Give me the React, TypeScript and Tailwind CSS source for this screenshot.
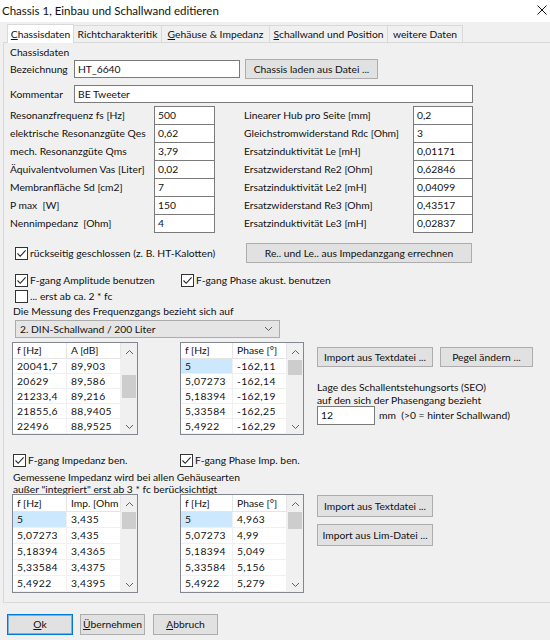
import React from 'react';

type Row = [string, string];

function Btn({ children, className = '' }: { children: React.ReactNode; className?: string }) {
  return (
    <div className={`flex items-center justify-center border border-[#adadad] bg-[#e1e1e1] whitespace-nowrap ${className}`}>
      {children}
    </div>
  );
}

function TextBox({ value, className = '' }: { value: string; className?: string }) {
  return (
    <div className={`flex items-center border border-[#7a7a7a] bg-white px-[3px] whitespace-nowrap ${className}`}>
      {value}
    </div>
  );
}

function Check({ checked }: { checked?: boolean }) {
  return (
    <div className="w-[13px] h-[13px] shrink-0 border border-[#333] bg-white flex items-center justify-center">
      {checked && (
        <svg width="11" height="11" viewBox="0 0 11 11">
          <path d="M1.5 5.5 L4.2 8.3 L9.6 2.3" fill="none" stroke="#222" strokeWidth="1.1" />
        </svg>
      )}
    </div>
  );
}

function Chevron({ up }: { up?: boolean }) {
  return (
    <svg width="9" height="6" viewBox="0 0 9 6">
      <polyline points={up ? '1,5 4.5,1.5 8,5' : '1,1 4.5,4.5 8,1'} fill="none" stroke="#606060" strokeWidth="1" />
    </svg>
  );
}

function Grid({
  head,
  rows,
  sel,
  size,
  c1,
  c2,
  thumb,
  headH,
  rowH,
}: {
  head: Row;
  rows: Row[];
  sel?: boolean;
  size: string;
  c1: string;
  c2: string;
  thumb: string;
  headH: string;
  rowH: string;
}) {
  return (
    <div className={`flex border border-[#828790] bg-white overflow-hidden shrink-0 ${size}`}>
      <div className="flex flex-col">
        <div className={`flex shrink-0 ${headH}`}>
          <div className={`${c1} border-r border-b border-[#e5e5e5] pl-[4px] flex items-center`}>{head[0]}</div>
          <div className={`${c2} border-r border-b border-[#e5e5e5] pl-[4px] flex items-center`}>{head[1]}</div>
        </div>
        {rows.map((r, i) => (
          <div key={i} className={`flex shrink-0 tracking-[0.4px] ${rowH}`}>
            <div
              className={`${c1} border-r border-b border-[#f0f0f0] pl-[4px] flex items-center ${sel && i === 0 ? 'bg-[#cce8ff]' : ''}`}
            >
              {r[0]}
            </div>
            <div className={`${c2} border-r border-b border-[#f0f0f0] pl-[4px] flex items-center`}>{r[1]}</div>
          </div>
        ))}
      </div>
      <div className="w-[16px] flex flex-col bg-[#f0f0f0]">
        <div className="h-[17px] flex items-center justify-center shrink-0">
          <Chevron up />
        </div>
        <div className="flex-1">
          <div className={`bg-[#cdcdcd] mx-[1px] ${thumb}`} />
        </div>
        <div className="h-[14px] flex items-center justify-center shrink-0">
          <Chevron />
        </div>
      </div>
    </div>
  );
}

const leftParams: Row[] = [
  ['Resonanzfrequenz fs [Hz]', '500'],
  ['elektrische Resonanzgüte Qes', '0,62'],
  ['mech. Resonanzgüte Qms', '3,79'],
  ['Äquivalentvolumen Vas [Liter]', '0,02'],
  ['Membranfläche Sd [cm2]', '7'],
  ['P max  [W]', '150'],
  ['Nennimpedanz  [Ohm]', '4'],
];

const rightParams: Row[] = [
  ['Linearer Hub pro Seite [mm]', '0,2'],
  ['Gleichstromwiderstand Rdc [Ohm]', '3'],
  ['Ersatzinduktivität Le [mH]', '0,01171'],
  ['Ersatzwiderstand Re2 [Ohm]', '0,62846'],
  ['Ersatzinduktivität Le2 [mH]', '0,04099'],
  ['Ersatzwiderstand Re3 [Ohm]', '0,43517'],
  ['Ersatzinduktivität Le3 [mH]', '0,02837'],
];

const ampRows: Row[] = [
  ['20041,7', '89,903'],
  ['20629', '89,586'],
  ['21233,4', '89,216'],
  ['21855,6', '88,9405'],
  ['22496', '88,9525'],
];

const phaseRows: Row[] = [
  ['5', '-162,11'],
  ['5,07273', '-162,14'],
  ['5,18394', '-162,19'],
  ['5,33584', '-162,25'],
  ['5,4922', '-162,29'],
];

const impRows: Row[] = [
  ['5', '3,435'],
  ['5,07273', '3,435'],
  ['5,18394', '3,4365'],
  ['5,33584', '3,4375'],
  ['5,4922', '3,4395'],
];

const impPhaseRows: Row[] = [
  ['5', '4,963'],
  ['5,07273', '4,99'],
  ['5,18394', '5,049'],
  ['5,33584', '5,156'],
  ['5,4922', '5,279'],
];

function ParamCol({ rows, labelW, boxW }: { rows: Row[]; labelW: string; boxW: string }) {
  return (
    <div className="flex flex-col">
      {rows.map(([l, v]) => (
        <div key={l} className="flex items-start h-[18px]">
          <div className={`${labelW} h-[19px] flex items-center whitespace-pre`}>{l}</div>
          <TextBox value={v} className={`${boxW} h-[19px]`} />
        </div>
      ))}
    </div>
  );
}

export default function App() {
  return (
    <div className="w-[550px] h-[640px] overflow-hidden bg-[#f0f0f0] text-[#111] text-[10.3px] leading-none font-[family-name:Lato,'Liberation_Sans',sans-serif] flex flex-col">
      {/* title bar */}
      <div className="h-[22px] shrink-0 bg-white flex items-center justify-between pl-[2px] pr-[3px]">
        <span className="text-[11.5px]">Chassis 1, Einbau und Schallwand editieren</span>
        <svg width="10" height="10" viewBox="0 0 10 10" className="mb-[2px]">
          <path d="M0.5 0.5 L9.5 9.5 M9.5 0.5 L0.5 9.5" stroke="#111" strokeWidth="1" />
        </svg>
      </div>

      {/* tabs */}
      <div className="h-[20px] shrink-0 flex items-end pl-[7px]">
        <div className="relative z-10 w-[67px] h-[19px] -mb-px bg-white border border-b-0 border-[#d9d9d9] flex items-center justify-center">
          <span>
            <span className="underline">C</span>hassisdaten
          </span>
        </div>
        <div className="w-[89px] h-[17px] -ml-px border border-b-0 border-[#d9d9d9] flex items-center justify-center">
          Richtcharakteritik
        </div>
        <div className="w-[109px] h-[17px] -ml-px border border-b-0 border-[#d9d9d9] flex items-center justify-center">
          <span>
            <span className="underline">G</span>ehäuse &amp; Impedanz
          </span>
        </div>
        <div className="w-[119px] h-[17px] -ml-px border border-b-0 border-[#d9d9d9] flex items-center justify-center">
          <span>
            <span className="underline">S</span>challwand und Position
          </span>
        </div>
        <div className="w-[76px] h-[17px] -ml-px border border-b-0 border-[#d9d9d9] flex items-center justify-center">
          weitere Daten
        </div>
      </div>

      {/* tab page */}
      <div className="ml-[3px] w-[600px] h-[561px] shrink-0 border border-[#d9d9d9] flex flex-col pl-[6px] overflow-hidden">
        <div className="mt-[2px] h-[14px] flex items-center">Chassisdaten</div>

        <div className="h-[20px] flex items-center">
          <div className="w-[64px]">Bezeichnung</div>
          <TextBox value="HT_6640" className="w-[166px] h-[18px]" />
          <Btn className="ml-[5px] w-[133px] h-[20px]">Chassis laden aus Datei ...</Btn>
        </div>

        <div className="mt-[5px] h-[20px] flex items-center">
          <div className="w-[64px]">Kommentar</div>
          <TextBox value="BE Tweeter" className="w-[399px] h-[18px]" />
        </div>

        <div className="mt-[2px] flex items-start">
          <ParamCol rows={leftParams} labelW="w-[144px]" boxW="w-[61px]" />
          <div className="ml-[29px]">
            <ParamCol rows={rightParams} labelW="w-[169px]" boxW="w-[60px]" />
          </div>
        </div>

        <div className="mt-[11px] h-[20px] flex items-center">
          <div className="w-[236px] flex items-center pl-[5px]">
            <Check checked />
            <span className="ml-[2px]">rückseitig geschlossen (z. B. HT-Kalotten)</span>
          </div>
          <Btn className="w-[226px] h-[20px]">Re.. und Le.. aus Impedanzgang errechnen</Btn>
        </div>

        <div className="mt-[9px] h-[16px] flex items-center">
          <div className="w-[171px] flex items-center pl-[5px]">
            <Check checked />
            <span className="ml-[2px]">F-gang Amplitude benutzen</span>
          </div>
          <Check checked />
          <span className="ml-[2px]">F-gang Phase akust. benutzen</span>
        </div>
        <div className="h-[16px] flex items-center pl-[5px]">
          <Check />
          <span className="ml-[2px]">... erst ab ca. 2 * fc</span>
        </div>
        <div className="h-[14px] flex items-center pl-[3px]">Die Messung des Frequenzgangs bezieht sich auf</div>
        <div className="mt-[2px] ml-[5px] w-[265px] h-[18px] border border-[#acacac] bg-[#e5e5e5] flex items-center justify-between pl-[4px] pr-[6px]">
          <span>2. DIN-Schallwand / 200 Liter</span>
          <Chevron />
        </div>

        <div className="mt-[4px] flex items-start">
          <div className="ml-[2px]">
            <Grid head={['f [Hz]', 'A [dB]']} rows={ampRows} size="w-[126px] h-[93px]" c1="w-[54px]" c2="w-[54px]" thumb="mt-[15px] h-[23px]" headH="h-[16px]" rowH="h-[15px]" />
          </div>
          <div className="ml-[42px]">
            <Grid head={['f [Hz]', 'Phase [°]']} rows={phaseRows} sel size="w-[124px] h-[93px]" c1="w-[52px]" c2="w-[54px]" thumb="h-[15px]" headH="h-[16px]" rowH="h-[15px]" />
          </div>
          <div className="ml-[13px] flex flex-col">
            <div className="mt-[5px] flex">
              <Btn className="w-[116px] h-[20px]">Import aus Textdatei ...</Btn>
              <Btn className="ml-[7px] w-[93px] h-[20px]">Pegel ändern ...</Btn>
            </div>
            <div className="mt-[14px] leading-[13px]">
              Lage des Schallentstehungsorts (SEO)
              <br />
              auf den sich der Phasengang bezieht
            </div>
            <div className="-mt-px flex items-center">
              <TextBox value="12" className="w-[58px] h-[19px]" />
              <span className="ml-[4px]">mm&nbsp; (&gt;0 = hinter Schallwand)</span>
            </div>
          </div>
        </div>

        <div className="mt-[17px] h-[16px] flex items-center">
          <div className="w-[170px] flex items-center pl-[3px]">
            <Check checked />
            <span className="ml-[2px]">F-gang Impedanz ben.</span>
          </div>
          <Check checked />
          <span className="ml-[2px]">F-gang Phase Imp. ben.</span>
        </div>
        <div className="mt-[3px] pl-[3px] leading-[12px]">
          Gemessene Impedanz wird bei allen Gehäusearten
          <br />
          außer "integriert" erst ab 3 * fc berücksichtigt
        </div>

        <div className="-mt-px flex items-start">
          <div className="ml-[2px]">
            <Grid head={['f [Hz]', 'Imp. [Ohm']} rows={impRows} sel size="w-[126px] h-[99px]" c1="w-[54px]" c2="w-[54px]" thumb="h-[17px]" headH="h-[17px]" rowH="h-[16px]" />
          </div>
          <div className="ml-[42px]">
            <Grid head={['f [Hz]', 'Phase [°]']} rows={impPhaseRows} sel size="w-[124px] h-[99px]" c1="w-[52px]" c2="w-[54px]" thumb="h-[17px]" headH="h-[17px]" rowH="h-[16px]" />
          </div>
          <div className="ml-[13px] flex flex-col">
            <Btn className="mt-[1px] w-[116px] h-[22px]">Import aus Textdatei ...</Btn>
            <Btn className="mt-[7px] w-[116px] h-[22px]">Import aus Lim-Datei ...</Btn>
          </div>
        </div>
      </div>

      {/* dialog buttons */}
      <div className="mt-[11px] h-[21px] flex pl-[7px]">
        <Btn className="w-[66px] h-[21px] !border-[#0078d7] shadow-[inset_0_0_0_1px_rgba(0,120,215,0.45)]">
          <span>
            <span className="underline">O</span>k
          </span>
        </Btn>
        <Btn className="ml-[7px] w-[65px] h-[21px]">
          <span>
            <span className="underline">Ü</span>bernehmen
          </span>
        </Btn>
        <Btn className="ml-[8px] w-[65px] h-[21px]">
          <span>
            <span className="underline">A</span>bbruch
          </span>
        </Btn>
      </div>
    </div>
  );
}
